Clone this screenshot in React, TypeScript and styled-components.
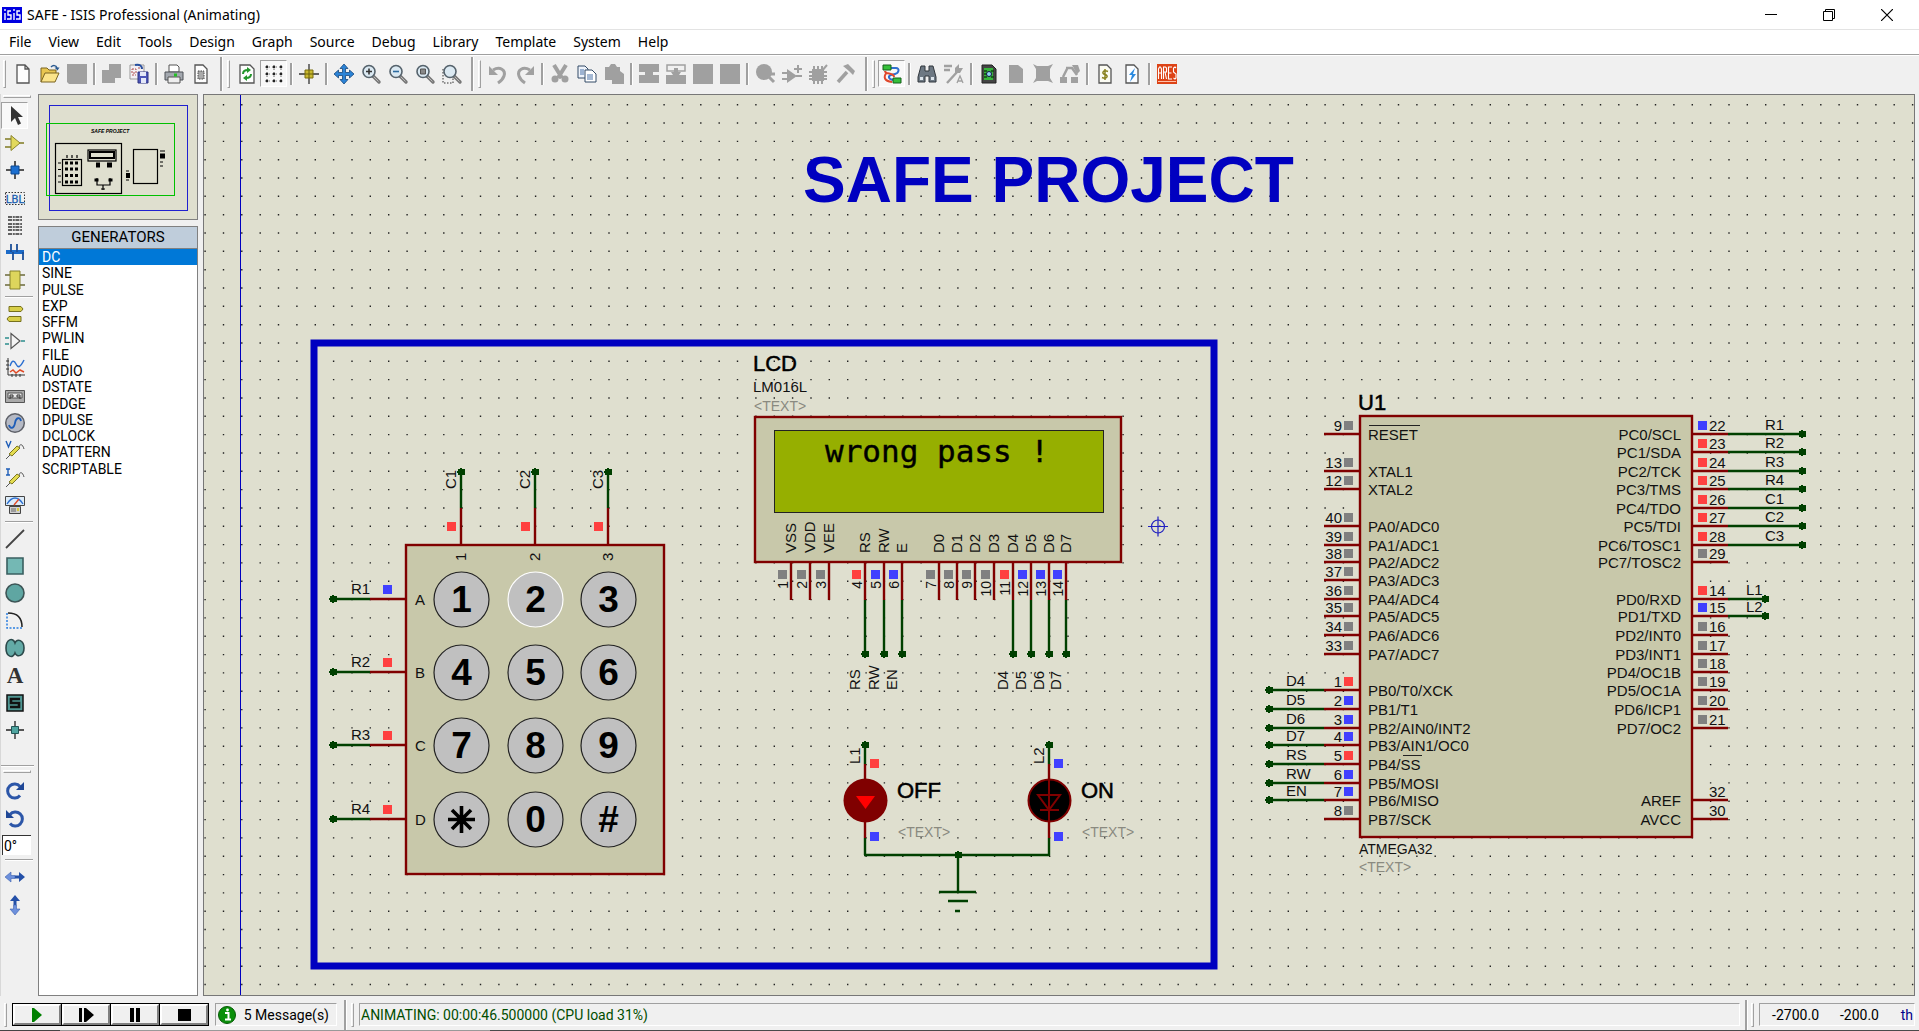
import React from "react";
import styled, { createGlobalStyle } from "styled-components";

const UI = `"Roboto", "Liberation Sans", sans-serif`;
const SYS = `"Noto Sans", "Open Sans", sans-serif`;
const ARIAL = `"Liberation Sans", Arial, sans-serif`;

const GlobalStyle = createGlobalStyle`
  * { box-sizing: border-box; }
  body { margin: 0; background: #f0f0f0; color: #000; font-family: ${UI}; overflow: hidden; }
  button { font: inherit; color: inherit; background: none; border: 0; padding: 0; margin: 0; }
  svg { display: block; }
`;

const Window = styled.div`
  height: 100vh;
  display: flex;
  flex-direction: column;
  background: #f0f0f0;
`;

const TitleBar = styled.header`
  display: flex;
  align-items: center;
  height: 30px;
  padding-left: 2px;
  background: #fff;
  border-bottom: 1px solid #e3e3e3;
`;
const Title = styled.h1`
  flex: 1;
  margin: 0 0 0 5px;
  font: 400 14px/28px ${SYS};
`;
const CaptionButton = styled.button`
  width: 58px;
  height: 28px;
  display: grid;
  place-items: center;
`;
const CaptionGroup = styled.div`
  display: flex;
  padding-right: 3px;
`;

const MenuBar = styled.nav`
  display: flex;
  height: 25px;
  padding-left: 2px;
  background: #fff;
  border-bottom: 1px solid #a0a0a0;
`;
const MenuItem = styled.button`
  padding: 0 7px;
  margin-right: 3px;
  font: 400 14px/22px ${SYS};
`;

const ToolBar = styled.div`
  display: flex;
  align-items: center;
  height: 39px;
  padding: 0 0 3px 3px;
  border-top: 1px solid #fff;
`;
const Tool = styled.button<{ $pressed?: boolean }>`
  width: 27px;
  height: 27px;
  display: grid;
  place-items: center;
  border: 1px solid;
  border-color: ${(p) => (p.$pressed ? "#a0a0a0 #fff #fff #a0a0a0" : "transparent")};
  background: ${(p) => (p.$pressed ? "#f8f8f8" : "transparent")};
`;
const Divider = styled.span`
  width: 8px;
  height: 22px;
  display: flex;
  justify-content: center;
  &::before {
    content: "";
    width: 2px;
    background: #a0a0a0;
    border-right: 1px solid #fff;
  }
`;
const Grip = styled.span`
  width: 3px;
  height: 28px;
  margin-right: 3px;
  border: 1px solid;
  border-color: #fff #a0a0a0 #a0a0a0 #fff;
`;
const BandBreak = styled.span`
  width: 13px;
  height: 34px;
  padding-left: 6px;
  &::before {
    content: "";
    display: block;
    width: 2px;
    height: 100%;
    background: #a0a0a0;
    border-right: 1px solid #fff;
  }
`;

const Workspace = styled.main`
  flex: 1;
  min-height: 0;
  display: flex;
  padding-right: 4px;
`;
const ToolColumn = styled.div`
  width: 38px;
  display: flex;
  flex-direction: column;
  border-left: 1px solid #d8d8d8;
`;
const ToolGroup = styled.div<{ $height: number }>`
  display: grid;
  grid-auto-rows: 1fr;
  height: ${(p) => p.$height}px;
  width: 27px;
`;
const HRule = styled.span<{ $wide?: boolean }>`
  height: 2px;
  margin: ${(p) => (p.$wide ? "21px 4px 2px 0" : "2px 5px 2px 4px")};
  border-top: 1px solid #a0a0a0;
  border-bottom: 1px solid #fff;
`;
const HGrip = styled.span`
  width: 28px;
  height: 3px;
  margin: 1px 0 4px 2px;
  border: 1px solid;
  border-color: #fff #a0a0a0 #a0a0a0 #fff;
`;
const AngleInput = styled.input`
  width: 29px;
  height: 20px;
  margin: 2px 0 2px 1px;
  padding: 0 1px;
  border: 0;
  border-top: 1px solid #333;
  border-left: 1px solid #333;
  border-radius: 0;
  background: #fff;
  font: 400 14px/18px ${UI};
`;

const SideBar = styled.aside`
  width: 160px;
  display: flex;
  flex-direction: column;
  gap: 6px;
  margin-right: 5px;
`;
const Overview = styled.section`
  height: 126px;
  background: #dfdfcf;
  border: 1px solid #808080;
`;
const Picker = styled.section`
  flex: 1;
  background: #fff;
  border: 1px solid #808080;
`;
const PickerTitle = styled.h2`
  margin: 0;
  background: #bfcddb;
  border-bottom: 1px solid #808080;
  font: 400 15px/21px ${UI};
  text-align: center;
`;
const PickerList = styled.ul`
  list-style: none;
  margin: 0;
  padding: 0;
  height: 228px;
  display: grid;
  grid-auto-rows: 1fr;
`;
const PickerItem = styled.button<{ $selected?: boolean }>`
  display: block;
  width: 100%;
  padding-left: 3px;
  text-align: left;
  font: 400 14px/16px ${UI};
  color: ${(p) => (p.$selected ? "#fff" : "#000")};
  background: ${(p) => (p.$selected ? "#0078d7" : "transparent")};
`;

const Canvas = styled.section`
  flex: 1;
  min-width: 0;
  border: 1px solid #777;
  background: #dfdfcf;
  overflow: hidden;
`;
const Sheet = styled.svg`
  width: 100%;
  height: 100%;
  font-family: ${ARIAL};
  font-size: 15px;
  fill: #111;
`;

const StatusBar = styled.footer`
  display: flex;
  align-items: center;
  height: 34px;
  padding: 3px 4px 0 4px;
`;
const Transport = styled.div`
  display: flex;
  height: 23px;
  margin-right: 6px;
  padding: 1px;
  background: #000;
  gap: 1px;
`;
const TransportButton = styled.button`
  width: 48px;
  display: grid;
  place-items: center;
  background: #f0f0f0;
  border: 2px solid;
  border-color: #fff #808080 #808080 #fff;
`;
const Field = styled.div<{ $grow?: boolean; $width?: number; $color?: string }>`
  flex: ${(p) => (p.$grow ? "1" : "none")};
  ${(p) => (p.$width ? `width: ${p.$width}px;` : "")}
  height: 23px;
  display: flex;
  align-items: center;
  padding: 0 1px;
  border: 1px solid;
  border-color: #a0a0a0 #fff #fff #a0a0a0;
  color: ${(p) => p.$color ?? "#000"};
  font: 400 14px/20px ${UI};
  white-space: nowrap;
`;
const MessageText = styled.span`
  flex: 1;
  padding-right: 6px;
  text-align: right;
`;
const Coord = styled.output`
  width: 60px;
  padding-right: 2px;
  text-align: right;
`;
const Unit = styled.span`
  flex: 1;
  text-align: right;
  color: #00008b;
`;
const StatusBreak = styled(BandBreak)<{ $tight?: boolean }>`
  width: ${(p) => (p.$tight ? 11 : 14)}px;
  padding-left: ${(p) => (p.$tight ? 5 : 7)}px;
  height: 30px;
`;
const StatusGrip = styled(Grip)`
  height: 24px;
  margin-right: 5px;
`;
const TaskEdge = styled.div`
  height: 1px;
  background: linear-gradient(90deg, #444 60px, #999 60px, #999 490px, #4a4a4a 490px);
`;

/* ---------- icons ---------- */

const G = "#a0a0a0";
const sheetPath = "M4 1h8l4 4v14H4z";
const Lens = () => (
  <>
    <path d="M12 12l6 6" stroke="#777" strokeWidth="3.4" strokeLinecap="round" />
    <path d="M12.500 12.500l5 5" stroke="#bbb" strokeWidth="1" />
    <circle cx="8" cy="7.500" r="6" fill="#dbe9f2" stroke="#55626c" strokeWidth="1.600" />
  </>
);
const icons: Record<string, React.ReactNode> = {
  new: <path d={sheetPath + "M12 1v4h4"} fill="#fdfdfd" stroke="#555" strokeWidth="1.300" />,
  open: (
    <>
      <path d="M1 18V4h6l2 2h7v3" fill="#e8c650" stroke="#7a6420" />
      <path d="M1 18l4-9h14l-4 9z" fill="#fbe48a" stroke="#7a6420" />
      <path d="M11 3c2-2 5-2 6 1" fill="none" stroke="#2a5a90" strokeWidth="1.500" />
      <path d="M14.500 3.500h5l-2 3z" fill="#2a5a90" />
    </>
  ),
  save: <path d="M0 0h20v20H2l-2-2z" fill={G} />,
  imp: <path d="M7 0h12v14h-6v5H0V6h7z" fill={G} />,
  exp: (
    <>
      <path d="M1 1h14v14H1z" fill="#f4f0f4" stroke="#999" />
      <path d="M3 5h4v4H3zM3 11h4M9 4h5" fill="none" stroke="#b05050" strokeDasharray="2 1" />
      <path d="M6 1c5-1 7 1 7 4" fill="none" stroke="#2750a0" strokeWidth="2" />
      <path d="M9 8h10v11H9z" fill="#4d56b8" stroke="#2c3380" />
      <path d="M11 8h6v4h-6zM12 14h5v5h-5z" fill="#e4e8f8" />
    </>
  ),
  print: (
    <>
      <path d="M5 1h8l2 2v5H5z" fill="#fff" stroke="#555" />
      <path d="M1 8h18v8H1z" fill="#a4a9b0" stroke="#4c5057" />
      <path d="M4 13h12v6H4z" fill="#eee" stroke="#555" />
      <path d="M10 9.500h3v3h-3z" fill="#25c025" />
    </>
  ),
  area: (
    <>
      <path d={sheetPath} fill="#fdfdfd" stroke="#555" strokeWidth="1.300" />
      <path d="M7 7h6v8H7z" fill="#aaa" stroke="#444" strokeDasharray="1.500 1" />
    </>
  ),
  refresh: (
    <>
      <path d="M3 1h10l4 4v14H3z" fill="#fdfdfd" stroke="#555" strokeWidth="1.300" />
      <path d="M6 10c0-4 3-4 5-4M14 10c0 4-3 4-5 4" fill="none" stroke="#23962b" strokeWidth="2" />
      <path d="M10 3l4 3-4 3zM10 11l-4 3 4 3z" fill="#23962b" />
    </>
  ),
  grid: (
    <>
      <path
        d="M1 3h18M1 10h18M1 17h18M3 1v18M10 1v18M17 1v18"
        stroke="#555"
        strokeWidth="1.200"
        strokeDasharray="1.300 2.200"
        fill="none"
      />
      <path d="M2 2h2v2H2zM9 2h2v2H9zM16 2h2v2h-2zM2 9h2v2H2zM9 9h2v2H9zM16 9h2v2h-2zM2 16h2v2H2zM9 16h2v2H9zM16 16h2v2h-2z" fill="#222" />
    </>
  ),
  origin: (
    <>
      <path d="M10 0v20M0 10h20" stroke="#333" strokeWidth="1.300" />
      <path d="M6 6h8v8H6z" fill="#c9b92e" stroke="#7b6f10" />
      <path d="M10 6v8M6 10h8" stroke="#6b6110" />
    </>
  ),
  pan: (
    <path
      d="M10 0l4 4.500h-2.500V8.500H15.500V6L20 10l-4.500 4v-2.500H11.500v4H14L10 20l-4-4.500h2.500v-4H4.500V14L0 10l4.500-4v2.500h4v-4H6z"
      fill="#2b83d6"
      stroke="#16487c"
      strokeWidth=".8"
    />
  ),
  zin: <><Lens /><path d="M8 4.500v6M5 7.500h6" stroke="#333" strokeWidth="1.600" /></>,
  zout: <><Lens /><path d="M5 7.500h6" stroke="#2c6ba0" strokeWidth="1.600" /></>,
  zall: <><Lens /><path d="M5.500 5h5v5h-5z" fill="#888" stroke="#555" /></>,
  zarea: (
    <>
      <path d="M1 5v14h10V12" fill="none" stroke="#333" strokeDasharray="1.500 1.500" />
      <Lens />
    </>
  ),
  undo: (
    <>
      <path d="M5 6c7-4 13 0 11 6-1 3-3 5-6 7" fill="none" stroke={G} strokeWidth="3" />
      <path d="M1 2v9h9z" fill={G} />
    </>
  ),
  redo: (
    <>
      <path d="M15 6C8 2 2 6 4 12c1 3 3 5 6 7" fill="none" stroke={G} strokeWidth="3" />
      <path d="M19 2v9h-9z" fill={G} />
    </>
  ),
  cut: (
    <>
      <path d="M4 1l8 13M16 1L8 14" stroke={G} strokeWidth="4" />
      <circle cx="5" cy="15" r="3.500" fill={G} />
      <circle cx="15" cy="15" r="3.500" fill={G} />
    </>
  ),
  copy: (
    <>
      <path d="M1 2h7l3 3v9H1z" fill="#eef3fb" stroke="#334a66" />
      <path d="M8 6h7l4 4v8H8z" fill="#fff" stroke="#334a66" />
      <path d="M3 6h4M3 8h4M3 10h4M10 11h6M10 13h6M10 15h6" stroke="#4a72a8" />
    </>
  ),
  paste: <path d="M1 3h4l2-3h4l2 3h3v4l4 3v10H8v-4H1z" fill={G} />,
  bcopy: <path d="M0 0h20v8h-6v3h6v8H0v-8h6V8H0z" fill={G} />,
  bmove: (
    <>
      <path d="M1 1h18v6H1z" fill="none" stroke={G} strokeWidth="1.500" />
      <path d="M8 4h4v4h3l-2 3h7v9H0v-9h7L5 8h3z" fill={G} />
    </>
  ),
  block: <path d="M0 0h20v20H0z" fill={G} />,
  pick: (
    <>
      <circle cx="9" cy="8" r="8" fill={G} />
      <path d="M13 12l6 6M15 10h5" stroke={G} strokeWidth="3" />
    </>
  ),
  make: (
    <>
      <path d="M5 5l10 7-10 7z" fill={G} />
      <path d="M0 9h5M0 15h5M14 12h6M12 5h8M16 1v8" stroke={G} strokeWidth="2" />
    </>
  ),
  pack: (
    <>
      <path d="M3 5h12v12H3z" fill={G} />
      <path d="M5 2v18M9 2v18M13 2v18M0 8h18M0 12h18M0 15h18M12 8l6-7" stroke={G} strokeWidth="2" />
    </>
  ),
  hammer: (
    <>
      <path d="M2 18l9-10" stroke={G} strokeWidth="3.500" />
      <path d="M7 2l5-2 7 7-2 4-4-4z" fill={G} />
    </>
  ),
  wire: (
    <>
      <path d="M8 4h6c4 0 3 5-1 6l-4 1c-3 1-3 4 2 5" fill="none" stroke="#2f6fd0" strokeWidth="2" />
      <path d="M3 7c0 4 9 1 9 6M5 8c-4 5-3 9 5 10" fill="none" stroke="#e0482c" strokeWidth="2" />
      <path d="M1 1h8v5H1zM11 14h8v5h-8z" fill="#35c03a" stroke="#14601a" />
    </>
  ),
  find: (
    <>
      <path d="M4 2h4v5h4V2h4l3 11v5h-7v-6H8v6H1v-5z" fill="#6d7883" stroke="#30363c" />
      <path d="M3 13h3v3H3zM14 13h3v3h-3z" fill="#dde5ec" />
    </>
  ),
  prop: (
    <>
      <path d="M0 2h8M0 6h6M3 19L14 7" stroke={G} strokeWidth="2.400" />
      <path d="M11 4l4-4v4h4l-3 5h-5z" fill={G} />
      <path d="M13 19l3-7 3 7M14 17h4" fill="none" stroke={G} strokeWidth="1.300" />
    </>
  ),
  dexp: (
    <>
      <path d="M3 1h10l4 4v14H3z" fill="#444" stroke="#222" />
      <path d="M5 4h9v12H5z" fill="#37b53c" />
      <path d="M5 7h3M5 10h3M5 13h3M12 7h3M12 13h3" stroke="#0d4a10" strokeWidth="1.300" />
      <circle cx="10" cy="10" r="2.500" fill="#8fd4f0" stroke="#114" />
    </>
  ),
  sheet: <path d="M3 1h9l5 4v14H3z" fill={G} />,
  rsheet: <path d="M0 0l4 2h11l5-2-3 5v9l3 5-5-2H4l-4 2 3-5V5z" fill={G} />,
  exit: (
    <>
      <path d="M6 4h6l5 7M7 5l-4 8" fill="none" stroke={G} strokeWidth="2.500" />
      <path d="M0 13h7v6H0zM11 13h7v6h-7zM12 1h6l2 6-3 3z" fill={G} />
    </>
  ),
  bill: (
    <>
      <path d={sheetPath} fill="#fbfbf2" stroke="#555" strokeWidth="1.300" />
      <path d="M13 7.500c-5-2-7 2-3 3s2 5-3 3M10 5v11" fill="none" stroke="#8a8320" strokeWidth="1.500" />
    </>
  ),
  erc: (
    <>
      <path d={sheetPath} fill="#fbfdff" stroke="#555" strokeWidth="1.300" />
      <path d="M13 4l-6 7h3l-2 7 6-8h-3z" fill="#2a8ae0" />
    </>
  ),
  ares: (
    <>
      <path d="M0 0h20v20H0z" fill="#dd4316" />
      <path
        d="M1.500 15V5l1-2h1l1 2v10M1.500 9h3M6.500 15V3h2l1 1v4H6.500M8 8l1.500 7M15 3h-3.500v12H15M11.500 9h3M19 4l-1-1-1.500 1v4L19 10v4l-1 1-1.500-1"
        fill="none"
        stroke="#fff"
        strokeWidth="1.100"
      />
      <path d="M1 17.500h18" stroke="#ffc0a8" />
    </>
  ),

  select: <path d="M6 0v16l4-4 3 7 3-1.500-3-6.500h5z" fill="#333" />,
  comp: (
    <>
      <path d="M0 6h6M0 14h6M13 10h6" stroke="#7f7a20" strokeWidth="1.500" />
      <path d="M6 2.500l9 7.500-9 7.500z" fill="#e2d95c" stroke="#8a8430" />
    </>
  ),
  junction: (
    <>
      <path d="M10 1v18M1 10h18" stroke="#222" strokeWidth="1.500" />
      <path d="M6 6h8v8H6z" fill="#1b6fd0" stroke="#0c4890" />
    </>
  ),
  label: (
    <>
      <path d="M.500 4.500h19v12H.500z" fill="none" stroke="#333" strokeDasharray="1.500 1.500" />
      <text x="10" y="15" textAnchor="middle" fontSize="11" fontFamily={UI} fill="#1c5fb0" stroke="#1c5fb0" strokeWidth=".3">LBL</text>
    </>
  ),
  script: (
    <path
      d="M3 2h14M3 5h14M3 9h14M3 12h14M3 15h14M3 19h14"
      stroke="#333"
      strokeWidth="1.300"
      strokeDasharray="4 .8 2 .6"
    />
  ),
  bus: (
    <>
      <path d="M1 9h18" stroke="#1c6bc8" strokeWidth="4" />
      <path d="M6 1v8M12 1v8M8 9v8M18 9v8" stroke="#1c4f98" strokeWidth="1.800" />
    </>
  ),
  sub: (
    <>
      <path d="M0 5h20M0 15h20" stroke="#6b6a3a" strokeWidth="1.500" />
      <path d="M5 1h10v18H5z" fill="#ddd55c" stroke="#84802a" />
    </>
  ),
  term: (
    <path d="M4 2.500h12l2 2.500-2 2.500H4zM16 12.500H4L2 15l2 2.500h12z" fill="#d8cf48" stroke="#77711e" />
  ),
  pin: (
    <>
      <path d="M0 7h4M0 13h4M16 10h4" stroke="#2d8d8d" strokeWidth="1.600" />
      <path d="M6 2.500l9 7.500-9 7.500z" fill="#f4f4f4" stroke="#555" strokeWidth="1.200" />
    </>
  ),
  graph: (
    <>
      <path d="M3 0v17h17M1 3h3M1 7h3M1 11h3M7 19v-3M11 19v-3M15 19v-3" fill="none" stroke="#333" />
      <path d="M5 8c2-6 4-6 6-2s4 4 8-4" fill="none" stroke="#2b6fd0" strokeWidth="1.500" />
      <path d="M5 14l3-2 3 3 4-3 4 2" fill="none" stroke="#df4b28" strokeWidth="1.500" />
    </>
  ),
  tape: (
    <>
      <path d="M.500 4.500h19v12H.500z" fill="#a9a9a9" stroke="#555" />
      <path d="M3 7h14v5H3z" fill="#e8e8e8" stroke="#555" />
      <path d="M5 13V9h3v2H5M15 13V9h-3v2h3" fill="none" stroke="#333" />
    </>
  ),
  gen: (
    <>
      <circle cx="10" cy="10" r="9.300" fill="#b5b9c4" stroke="#5d6068" strokeWidth="1.500" />
      <path d="M4 12c1 4 5 4 6-2s5-6 6-2" fill="none" stroke="#1e5db8" strokeWidth="1.800" />
    </>
  ),
  vprobe: (
    <>
      <path d="M1 1l2.500 6L6 1" fill="none" stroke="#1e5db8" strokeWidth="1.400" />
      <path d="M1 19l4-4M14 8c1-6 4-3 5 1" fill="none" stroke="#555" />
      <path d="M4 14l8-8 3 2-8 8z" fill="#e4dc50" stroke="#7b7520" />
    </>
  ),
  iprobe: (
    <>
      <path d="M1 1h4M3 1v6M1 7h4" fill="none" stroke="#1e5db8" strokeWidth="1.400" />
      <path d="M1 19l4-4M14 8c1-6 4-3 5 1" fill="none" stroke="#555" />
      <path d="M4 14l8-8 3 2-8 8z" fill="#e4dc50" stroke="#7b7520" />
    </>
  ),
  instr: (
    <>
      <path d="M.500 1.500h19v9H.500z" fill="#dcebf8" stroke="#444" />
      <path d="M2 9c5-8 11-8 16 0" fill="none" stroke="#2b6fd0" strokeWidth="1.400" />
      <path d="M9 10l5-6" stroke="#df4b28" strokeWidth="1.400" />
      <path d="M4.500 11.500h11v7h-11z" fill="#d0d0d0" stroke="#444" />
      <path d="M6 14h5M6 16h5" stroke="#666" />
      <path d="M12 13h2v3h-2z" fill="#d8c838" />
    </>
  ),
  line: <path d="M1 19L19 1" stroke="#444" strokeWidth="1.800" />,
  box: <path d="M2 2h16v16H2z" fill="#74b8b4" stroke="#3a5f60" strokeWidth="1.600" />,
  circle: <circle cx="10" cy="10" r="9" fill="#5fa6a2" stroke="#3d5556" strokeWidth="1.600" />,
  arc: (
    <>
      <path d="M2 2v15h15" fill="none" stroke="#2b7fe0" strokeWidth="1.500" strokeDasharray="2 1.500" />
      <path d="M3 2c9 0 14 5 14 14" fill="none" stroke="#222" strokeWidth="1.500" />
    </>
  ),
  path: (
    <path
      d="M10 5C8-1 1 1 1 10s7 11 9 5c2 5 9 3 9-5S12 0 10 5z"
      fill="#63aaa6"
      stroke="#2c4a4b"
      strokeWidth="1.600"
    />
  ),
  text: (
    <text x="10" y="18" textAnchor="middle" fontSize="23" fontWeight="700" fontFamily={`"Liberation Serif", serif`} fill="#333">A</text>
  ),
  symbol: (
    <>
      <path d="M2 2h16v16H2z" fill="#4f9692" stroke="#111" strokeWidth="1.500" />
      <path d="M15 6H6v4h8v4H5" fill="none" stroke="#111" strokeWidth="2.600" />
    </>
  ),
  marker: (
    <>
      <path d="M10 1v18M1 10h18" stroke="#222" strokeWidth="1.300" />
      <path d="M6.500 6.500h7v7h-7z" fill="#4fa5a0" stroke="#255" />
    </>
  ),
  cw: (
    <>
      <path d="M15 14.500a7 7 0 1 1 0-9" fill="none" stroke="#2c56a8" strokeWidth="3" />
      <path d="M19 1v8h-8z" fill="#1f4796" />
    </>
  ),
  ccw: (
    <>
      <path d="M5 14.500a7 7 0 1 0 0-9" fill="none" stroke="#2c56a8" strokeWidth="3" />
      <path d="M1 1v8h8z" fill="#1f4796" />
    </>
  ),
  fliph: (
    <>
      <path d="M0 10l6-5v3.500h4v3H6V15z" fill="#6d90dc" stroke="#3c62b0" strokeWidth=".6" />
      <path d="M20 10l-6-5v3.500h-4v3h4V15z" fill="#2450a8" />
    </>
  ),
  flipv: (
    <>
      <path d="M10 0L5 6h3.500v4h3V6H15z" fill="#2450a8" />
      <path d="M10 20l-5-6h3.500v-4h3v4H15z" fill="#6d90dc" stroke="#3c62b0" strokeWidth=".6" />
    </>
  ),
};

const IconSvg = styled.svg`
  width: 20px;
  height: 20px;
  overflow: visible;
`;
const Icon = ({ name }: { name: string }) => (
  <IconSvg viewBox="0 0 20 20" aria-hidden="true">{icons[name]}</IconSvg>
);

const toolbar =
  "new open save | imp exp | print area # refresh grid* | origin | pan zin zout zall zarea # undo redo | cut copy paste | bcopy bmove block block | pick make pack hammer # wire* | find prop | dexp sheet rsheet exit | bill erc | ares".split(" ");

const columns: string[][] = [
  ["select*", "comp", "junction", "label", "script", "bus", "sub"],
  ["term", "pin", "graph", "tape", "gen", "vprobe", "iprobe", "instr"],
  ["line", "box", "circle", "arc", "path", "text", "symbol", "marker"],
];

const ToolItem = ({ code }: { code: string }) => {
  const pressed = code.endsWith("*");
  const name = code.replace("*", "");
  return (
    <Tool type="button" $pressed={pressed} aria-label={name} aria-pressed={pressed || undefined}>
      <Icon name={name} />
    </Tool>
  );
};

/* ---------- schematic ---------- */

const RED = "#800000";
const GREEN = "#004000";
const LEVEL: Record<string, string> = { r: "#ff4040", b: "#4040ff", g: "#808080" };

const Wire = ({ d, color }: { d: string; color: string }) => (
  <path d={d} fill="none" stroke={color} strokeWidth="2.400" />
);
const Node = ({ x, y }: { x: number; y: number }) => (
  <path d={`M${x - 3} ${y - 3}h7v6h-7zM${x - 4} ${y - 1}h8v2h-8zM${x - 1} ${y - 4}h2v8h-2z`} fill={GREEN} />
);
const Level = ({ x, y, s }: { x: number; y: number; s: string }) => (
  <rect x={x - 4} y={y - 4} width="9" height="9" fill={LEVEL[s]} />
);
const Turned = ({ x, y, end, size, children }: { x: number; y: number; end?: boolean; size?: number; children: React.ReactNode }) => (
  <text transform={`translate(${x} ${y}) rotate(-90)`} textAnchor={end ? "end" : "start"} fontSize={size}>
    {children}
  </text>
);
const Placeholder = ({ x, y }: { x: number; y: number }) => (
  <text x={x} y={y} fontSize="14" fill="#8a8a80">&lt;TEXT&gt;</text>
);
const PartName = ({ x, y, children }: { x: number; y: number; children: React.ReactNode }) => (
  <text x={x} y={y} fontSize="22" fill="#000" stroke="#000" strokeWidth=".5">{children}</text>
);

const PITCH_X = 18.36;
const PITCH_Y = 18.33;
const dots = (() => {
  let d = "";
  for (let i = 0; i < 180; i++)
    for (let j = 0; j < 90; j++)
      d += `M${(204.400 + i * PITCH_X).toFixed(1)} ${(104.700 + j * PITCH_Y).toFixed(1)}h1.400`;
  return d;
})();

const keyX = [461, 535, 608];
const keyY = [599, 672, 745, 819];
const keys = ["123", "456", "789", "*0#"];

const lcdPins: [number, string, string, string?][] = [
  [791, "VSS", "g"], [810, "VDD", "g"], [829, "VEE", "g"],
  [865, "RS", "r", "RS"], [884, "RW", "b", "RW"], [902, "E", "b", "EN"],
  [939, "D0", "g"], [957, "D1", "g"], [975, "D2", "g"], [994, "D3", "g"],
  [1013, "D4", "r", "D4"], [1031, "D5", "b", "D5"], [1049, "D6", "b", "D6"], [1066, "D7", "b", "D7"],
];

type Pin = [number, number, string, string?, string?];
const leftPins: Pin[] = [
  [434, 9, "RESET", "g"], [471, 13, "XTAL1", "g"], [489, 12, "XTAL2", "g"],
  [526, 40, "PA0/ADC0", "g"], [545, 39, "PA1/ADC1", "g"], [562, 38, "PA2/ADC2", "g"],
  [580, 37, "PA3/ADC3", "g"], [599, 36, "PA4/ADC4", "g"], [616, 35, "PA5/ADC5", "g"],
  [635, 34, "PA6/ADC6", "g"], [654, 33, "PA7/ADC7", "g"],
  [690, 1, "PB0/T0/XCK", "r", "D4"], [709, 2, "PB1/T1", "b", "D5"],
  [728, 3, "PB2/AIN0/INT2", "b", "D6"], [745, 4, "PB3/AIN1/OC0", "b", "D7"],
  [764, 5, "PB4/SS", "r", "RS"], [783, 6, "PB5/MOSI", "b", "RW"],
  [800, 7, "PB6/MISO", "b", "EN"], [819, 8, "PB7/SCK", "g"],
];
const rightPins: Pin[] = [
  [434, 22, "PC0/SCL", "b", "R1"], [452, 23, "PC1/SDA", "r", "R2"], [471, 24, "PC2/TCK", "r", "R3"],
  [489, 25, "PC3/TMS", "r", "R4"], [508, 26, "PC4/TDO", "r", "C1"], [526, 27, "PC5/TDI", "r", "C2"],
  [545, 28, "PC6/TOSC1", "r", "C3"], [562, 29, "PC7/TOSC2", "g"],
  [599, 14, "PD0/RXD", "r", "L1"], [616, 15, "PD1/TXD", "b", "L2"], [635, 16, "PD2/INT0", "g"],
  [654, 17, "PD3/INT1", "g"], [672, 18, "PD4/OC1B", "g"], [690, 19, "PD5/OC1A", "g"],
  [709, 20, "PD6/ICP1", "g"], [728, 21, "PD7/OC2", "g"],
  [800, 32, "AREF"], [819, 30, "AVCC"],
];

const Keypad = () => (
  <g>
    {keyX.map((x, i) => (
      <g key={x}>
        <Wire color={GREEN} d={`M${x} 472V508`} />
        <Wire color={RED} d={`M${x} 508V544`} />
        <Node x={x} y={472} />
        <Level x={x - 10} y={526} s="r" />
        <Turned x={x - 5} y={489}>{`C${i + 1}`}</Turned>
      </g>
    ))}
    {keyY.map((y, i) => (
      <g key={y}>
        <Wire color={GREEN} d={`M333 ${y}H370`} />
        <Wire color={RED} d={`M370 ${y}H406`} />
        <Node x={333} y={y} />
        <Level x={387} y={y - 10} s={i ? "r" : "b"} />
        <text x="351" y={y - 5}>{`R${i + 1}`}</text>
      </g>
    ))}
    <rect x="406" y="545" width="258" height="329" fill="#c8c8aa" stroke={RED} strokeWidth="2.400" />
    {keyX.map((x, i) => <Turned key={x} x={x + 5} y={561}>{i + 1}</Turned>)}
    {keyY.map((y, i) => <text key={y} x="415" y={y + 6}>{"ABCD"[i]}</text>)}
    {keys.map((row, r) =>
      row.split("").map((k, c) => (
        <g key={k}>
          <circle cx={keyX[c] + 0.5} cy={keyY[r] + 0.5} r="27.500" fill="#c0c0c0" stroke={k === "2" ? "#fff" : "#222"} strokeWidth="1.200" />
          {k === "*" ? (
            <path
              d="M448 819.500h27M461.500 806v27M452 810l19 19M471 810l-19 19"
              stroke="#000"
              strokeWidth="3.600"
            />
          ) : (
            <text x={keyX[c] + 0.5} y={keyY[r] + 13} fontSize="37" fontWeight="700" textAnchor="middle" fill="#000">{k}</text>
          )}
        </g>
      ))
    )}
  </g>
);

const Lcd = () => (
  <g>
    <PartName x={753} y={371}>LCD</PartName>
    <text x="753" y="392">LM016L</text>
    <Placeholder x={754} y={411} />
    <rect x="755" y="417" width="366" height="145" fill="#c8c8aa" stroke={RED} strokeWidth="2.400" />
    <rect x="774.500" y="430.500" width="329" height="82" fill="#96af00" stroke="#222" />
    <text x="825" y="462" fontSize="31" fontFamily={`"DejaVu Sans Mono", monospace`} fill="#000" stroke="#000" strokeWidth=".4" xmlSpace="preserve">wrong pass !</text>
    {lcdPins.map(([x, name, level, net], i) => (
      <g key={name}>
        <Wire color={RED} d={`M${x} 563V600`} />
        {net && <Wire color={GREEN} d={`M${x} 600V654`} />}
        {net && <Node x={x} y={654} />}
        {net && <Turned x={x - 5} y={690}>{net}</Turned>}
        <Level x={x - 9} y={574} s={level} />
        <Turned x={x - 3} y={581} end size={14}>{i + 1}</Turned>
        <Turned x={x + 5} y={553}>{name}</Turned>
      </g>
    ))}
  </g>
);

const Leds = () => (
  <g>
    {[865, 1049].map((x, i) => (
      <g key={x}>
        <Wire color={GREEN} d={`M${x} 745V764M${x} 838V855`} />
        <Wire color={RED} d={`M${x} 764V838`} />
        <Node x={x} y={745} />
        <Turned x={x - 5} y={764}>{`L${i + 1}`}</Turned>
        <Level x={x + 9} y={763} s={i ? "b" : "r"} />
        <Level x={x + 9} y={836} s="b" />
        <PartName x={x + 32} y={798}>{i ? "ON" : "OFF"}</PartName>
        <Placeholder x={x + 33} y={837} />
      </g>
    ))}
    <circle cx="865.500" cy="800.500" r="22" fill={RED} />
    <path d="M856 796h19l-9.500 13z" fill="#ff0000" />
    <circle cx="1049.500" cy="800.500" r="21" fill="#000" stroke={RED} strokeWidth="2" />
    <path d="M1038 795h22l-11 15zM1040 810h19M1049 779v43" fill="none" stroke={RED} strokeWidth="2" />
    <Wire color={GREEN} d="M864 855H1050M958 855V892M939 892H976M948 901H968M955 911H960" />
    <Node x={958} y={855} />
  </g>
);

const Mcu = () => (
  <g>
    <PartName x={1358} y={410}>U1</PartName>
    <rect x="1360" y="416" width="332" height="421" fill="#c8c8aa" stroke={RED} strokeWidth="2.400" />
    {leftPins.map(([y, no, name, level, net]) => (
      <g key={no}>
        <Wire color={RED} d={`M1324 ${y}H1360`} />
        {net && <Wire color={GREEN} d={`M1269 ${y}H1324`} />}
        {net && <Node x={1269} y={y} />}
        {net && <text x="1286" y={y - 4}>{net}</text>}
        <text x="1342" y={y - 3} textAnchor="end">{no}</text>
        <Level x={1348} y={y - 9} s={level!} />
        <text x="1368" y={y + 6}>{name}</text>
      </g>
    ))}
    {rightPins.map(([y, no, name, level, net]) => {
      const end = net?.startsWith("L") ? 1765 : 1802;
      return (
        <g key={no}>
          <Wire color={RED} d={`M1692 ${y}H1728`} />
          {net && <Wire color={GREEN} d={`M1728 ${y}H${end}`} />}
          {net && <Node x={end} y={y} />}
          {net && <text x={end === 1765 ? 1746 : 1765} y={y - 4}>{net}</text>}
          {level && <Level x={1702} y={y - 9} s={level} />}
          <text x="1709" y={y - 3}>{no}</text>
          <text x="1681" y={y + 6} textAnchor="end">{name}</text>
        </g>
      );
    })}
    <path d="M1369 425.500h51M1403 755.500h19" stroke="#222" strokeWidth="1.200" />
    <text x="1359" y="854" fontSize="14">ATMEGA32</text>
    <Placeholder x={1359} y={872} />
  </g>
);

const Schematic = () => (
  <Sheet role="img" aria-label="Safe project schematic">
    <g transform="translate(-204 -95)">
      <path d={dots} stroke="#222" strokeWidth="1.400" />
      <path d="M240.500 95v2000" stroke="#0000c0" />
      <text x="803" y="202" fontSize="64" fontWeight="700" fill="#0000c0">SAFE PROJECT</text>
      <rect x="314" y="343" width="900" height="623" fill="none" stroke="#0000c0" strokeWidth="7" />
      <Keypad />
      <Lcd />
      <Leds />
      <Mcu />
      <g fill="none" stroke="#2020c0" strokeWidth="1.200">
        <circle cx="1158" cy="526.500" r="6.500" />
        <path d="M1148 526.500h20M1158 516.500v20" />
      </g>
    </g>
  </Sheet>
);

const Thumbnail = () => (
  <svg width="158" height="124" viewBox="39 95 158 124" role="img" aria-label="Sheet overview">
    <text x="91" y="133" fontSize="5" fontWeight="700" fontStyle="italic" fontFamily={ARIAL}>SAFE PROJECT</text>
    <g fill="none" stroke="#000" strokeWidth="1.200">
      <rect x="55.500" y="143.500" width="66" height="50" />
      <rect x="62.500" y="159.500" width="19" height="26" />
      <rect x="133.500" y="149.500" width="24" height="34" />
      <rect x="88" y="150" width="28" height="11" />
      <path d="M90 152h24v6H90z" strokeWidth="2" />
      <path d="M65 163h14M65 169h14M65 175.500h14M65 182h14" strokeWidth="3" strokeDasharray="3 2" />
      <path d="M67 155v3M72 155v3M77 155v3M58 163h3M58 169.500h3M58 176h3M58 182h3" />
      <path d="M97 178v7h13v-7M103 185v5M101 189h4" />
      <path d="M94.500 180h4M108.500 180h4" strokeWidth="3" />
      <path d="M96 165h4M107 165h5M126 175.500h4M160 156h5" strokeWidth="5" />
      <path d="M126 171h3M126 180h3M160 151h5M160 162h3M160 166h3" />
    </g>
    <rect x="49.500" y="105.500" width="138" height="105" fill="none" stroke="#2020d0" />
    <rect x="46.500" y="123.500" width="128" height="72" fill="none" stroke="#00c000" />
  </svg>
);

const menus = ["File", "View", "Edit", "Tools", "Design", "Graph", "Source", "Debug", "Library", "Template", "System", "Help"];
const generators = ["DC", "SINE", "PULSE", "EXP", "SFFM", "PWLIN", "FILE", "AUDIO", "DSTATE", "DEDGE", "DPULSE", "DCLOCK", "DPATTERN", "SCRIPTABLE"];

export default function App() {
  return (
    <Window>
      <GlobalStyle />
      <TitleBar>
        <svg width="20" height="16" viewBox="0 0 20 16" aria-hidden="true">
          <path d="M0 0h20v16H0z" fill="#0000e0" />
          <path d="M3 6v7M3 2v2M9 4H6v4h3v4H5M12 6v7M12 2v2M18 4h-3v4h3v4h-4" fill="none" stroke="#fff" strokeWidth="1.400" />
        </svg>
        <Title>SAFE - ISIS Professional (Animating)</Title>
        <CaptionGroup>
          <CaptionButton type="button" aria-label="Minimize">
            <svg width="12" height="12"><path d="M0 5.500h12" stroke="#000" /></svg>
          </CaptionButton>
          <CaptionButton type="button" aria-label="Restore">
            <svg width="12" height="12"><path d="M.500 2.500h9v9h-9zM2.500 2.500v-2h9v9h-2" fill="none" stroke="#000" /></svg>
          </CaptionButton>
          <CaptionButton type="button" aria-label="Close">
            <svg width="12" height="12"><path d="M0 0l12 12M12 0L0 12" stroke="#000" strokeWidth="1.200" /></svg>
          </CaptionButton>
        </CaptionGroup>
      </TitleBar>
      <MenuBar>
        {menus.map((m) => <MenuItem key={m} type="button">{m}</MenuItem>)}
      </MenuBar>
      <ToolBar role="toolbar">
        <Grip />
        {toolbar.map((t, i) =>
          t === "|" ? <Divider key={i} /> :
          t === "#" ? <React.Fragment key={i}><BandBreak /><Grip /></React.Fragment> :
          <ToolItem key={i} code={t} />
        )}
      </ToolBar>
      <Workspace>
        <ToolColumn role="toolbar">
          <HGrip />
          <ToolGroup $height={192}>{columns[0].map((c) => <ToolItem key={c} code={c} />)}</ToolGroup>
          <HRule />
          <ToolGroup $height={219}>{columns[1].map((c) => <ToolItem key={c} code={c} />)}</ToolGroup>
          <HRule />
          <ToolGroup $height={219}>{columns[2].map((c) => <ToolItem key={c} code={c} />)}</ToolGroup>
          <HRule $wide />
          <HGrip />
          <ToolGroup $height={56}>
            <ToolItem code="cw" />
            <ToolItem code="ccw" />
          </ToolGroup>
          <AngleInput aria-label="Rotation angle" defaultValue="0°" />
          <HRule />
          <ToolGroup $height={56}>
            <ToolItem code="fliph" />
            <ToolItem code="flipv" />
          </ToolGroup>
        </ToolColumn>
        <SideBar>
          <Overview><Thumbnail /></Overview>
          <Picker>
            <PickerTitle>GENERATORS</PickerTitle>
            <PickerList>
              {generators.map((g, i) => (
                <li key={g}><PickerItem type="button" $selected={i === 0}>{g}</PickerItem></li>
              ))}
            </PickerList>
          </Picker>
        </SideBar>
        <Canvas><Schematic /></Canvas>
      </Workspace>
      <StatusBar>
        <StatusGrip />
        <Transport>
          <TransportButton type="button" aria-label="Play">
            <svg width="12" height="14"><path d="M1 0h2l8 7-8 7H1z" fill="#008000" /></svg>
          </TransportButton>
          <TransportButton type="button" aria-label="Step">
            <svg width="15" height="14"><path d="M0 0h3v14H0zM5 0h2l8 7-8 7H5z" /></svg>
          </TransportButton>
          <TransportButton type="button" aria-label="Pause">
            <svg width="10" height="14"><path d="M0 0h4v14H0zM6 0h4v14H6z" /></svg>
          </TransportButton>
          <TransportButton type="button" aria-label="Stop">
            <svg width="13" height="12"><path d="M0 0h13v12H0z" /></svg>
          </TransportButton>
        </Transport>
        <Field $width={122}>
          <svg width="20" height="18" viewBox="0 0 20 18" aria-hidden="true">
            <circle cx="10" cy="9" r="8.500" fill="#0a8f0a" stroke="#065a06" />
            <path d="M8 7h3.500v6M8 13.500h6" stroke="#fff" strokeWidth="2" fill="none" />
            <circle cx="10.500" cy="4" r="1.400" fill="#fff" />
          </svg>
          <MessageText>5 Message(s)</MessageText>
        </Field>
        <StatusBreak />
        <StatusGrip />
        <Field $grow $color="#004d00">ANIMATING: 00:00:46.500000 (CPU load 31%)</Field>
        <StatusBreak $tight />
        <StatusGrip />
        <Field $width={156}>
          <Coord>-2700.0</Coord>
          <Coord>-200.0</Coord>
          <Unit>th</Unit>
        </Field>
      </StatusBar>
      <TaskEdge />
    </Window>
  );
}
